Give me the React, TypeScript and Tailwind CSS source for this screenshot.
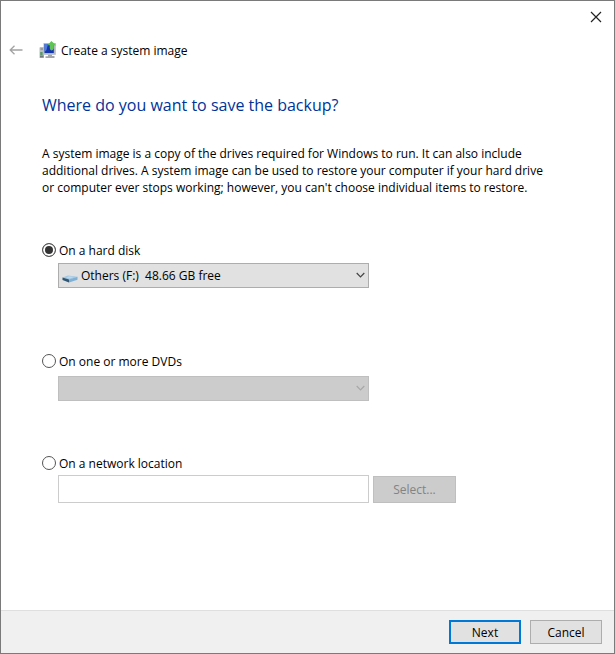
import React, { useState } from "react"

type Target = "disk" | "dvd" | "network"

const BackIcon = () => (
  <svg width="14" height="12" viewBox="0 0 14 12" fill="none" stroke="#a3a3a3">
    <path d="M13.5 6H1.2M5.5 1.8L1.2 6L5.5 10.2" strokeWidth="1.3" />
  </svg>
)

const CloseIcon = () => (
  <svg width="12" height="12" viewBox="0 0 12 12" fill="none" stroke="#222">
    <path d="M1 1l10 10M11 1L1 11" strokeWidth="1.2" />
  </svg>
)

const SystemImageIcon = () => (
  <svg width="18" height="18" viewBox="0 0 18 18">
    <path d="M1 6H5V17H0.5V7z" fill="#b9bcc0" />
    <path d="M1.5 7.5H4V8.5H1.5zM1 14.5H4.5V16.5H1z" fill="#73787d" />
    <rect x="1.2" y="11" width="2.4" height="3" fill="#5a9a6a" />
    <path d="M4.5 2H16.8V13.8H4.5z" fill="#b4b9c3" />
    <path d="M5.5 3H14.8V12H5.5z" fill="#1536ae" />
    <path d="M5.5 3H9L7.5 9L5.5 11z" fill="#4d7be0" />
    <path d="M9 13.8h4V15h2.5v2H6.5V15.2H9z" fill="#a2a6ab" />
    <path d="M12.4 0L17 4.2H14.8V7.5Q14 9.5 12.2 9.5Q10.8 8.8 10.8 7V4.2H8.5z" fill="#5fc455" />
  </svg>
)

const DriveIcon = () => (
  <svg width="16" height="10" viewBox="0 0 16 10">
    <path d="M0.5 4.5L6 2.4L15.5 3.8L7 6.8z" fill="#a3c8e2" />
    <path d="M0.5 4.5L7 6.6V9.4L0.5 7z" fill="#2f5673" />
    <path d="M7 6.6L15.5 3.8V6.8L7 9.4z" fill="#7fb0d6" />
    <path d="M4 4.4L7 3.2L12 4L8 5.6z" fill="#bcd9ec" />
  </svg>
)

const Chevron = ({ color }: { color: string }) => (
  <svg
    className="pointer-events-none absolute top-2 right-1"
    width="9"
    height="8"
    viewBox="0 0 9 8"
    fill="none"
    stroke={color}
  >
    <path d="M0.7 2L4.5 5.8L8.3 2" strokeWidth="1.2" />
  </svg>
)

type ChoiceProps = {
  label: string
  value: Target
  target: Target
  onPick: (value: Target) => void
}

const Choice = ({ label, value, target, onPick }: ChoiceProps) => (
  <label className="flex h-5 w-fit items-center gap-[3px]">
    <input
      type="radio"
      name="target"
      checked={target === value}
      onChange={() => onPick(value)}
      className="size-[14px] appearance-none rounded-full border border-[#555] bg-white checked:bg-[#333] checked:shadow-[inset_0_0_0_2px_white]"
    />
    {label}
  </label>
)

const App = () => {
  const [target, setTarget] = useState<Target>("disk")

  return (
    <div className="flex min-h-screen flex-col border border-[#7a7a7a] bg-white font-['Open_Sans','Noto_Sans',sans-serif] text-[12px] leading-[17px] text-black">
      <header>
        <div className="flex h-8 items-center justify-end pr-3">
          <button aria-label="Close">
            <CloseIcon />
          </button>
        </div>
        <div className="flex h-[34px] items-center pl-2">
          <button aria-label="Back" disabled>
            <BackIcon />
          </button>
          <div className="ml-4 flex items-center gap-1">
            <SystemImageIcon />
            <span>Create a system image</span>
          </div>
        </div>
      </header>

      <main className="flex-1 px-[41px]">
        <h1 className="mt-[26px] text-[16px] leading-6 text-[#003399]">
          Where do you want to save the backup?
        </h1>
        <p className="mt-7">
          A system image is a copy of the drives required for Windows to run. It can also include
          <br />
          additional drives. A system image can be used to restore your computer if your hard drive
          <br />
          or computer ever stops working; however, you can't choose individual items to restore.
        </p>

        <div className="mt-11">
          <Choice label="On a hard disk" value="disk" target={target} onPick={setTarget} />
          <div className="relative mt-[3px] ml-4 w-[311px]">
            <select
              aria-label="Hard disk"
              className="block h-[25px] w-full appearance-none border border-[#adadad] bg-[#e1e1e1] pl-[22px]"
            >
              <option>Others (F:)&nbsp; 48.66 GB free</option>
            </select>
            <span className="pointer-events-none absolute top-[10px] left-1">
              <DriveIcon />
            </span>
            <Chevron color="#444" />
          </div>
        </div>

        <div className="mt-[63px]">
          <Choice label="On one or more DVDs" value="dvd" target={target} onPick={setTarget} />
          <div className="relative mt-[5px] ml-4 w-[311px]">
            <select
              aria-label="DVD drive"
              disabled
              className="block h-[25px] w-full appearance-none border border-[#bfbfbf] bg-[#cccccc] opacity-100"
            />
            <Chevron color="#a8a8a8" />
          </div>
        </div>

        <div className="mt-13">
          <Choice label="On a network location" value="network" target={target} onPick={setTarget} />
          <div className="mt-[2px] ml-4 flex items-center gap-1">
            <input
              type="text"
              aria-label="Network location"
              className="h-7 w-[311px] border border-[#cccccc] bg-white px-1"
            />
            <button
              disabled
              className="h-[27px] w-[83px] border border-[#bfbfbf] bg-[#cccccc] text-[#838383]"
            >
              Select...
            </button>
          </div>
        </div>
      </main>

      <footer className="flex justify-end gap-[9px] border-t border-[#dfdfdf] bg-[#f0f0f0] py-[9px] pr-3">
        <button className="h-6 w-[72px] border-2 border-[#0078d7] bg-[#e1e1e1]">Next</button>
        <button className="h-6 w-[72px] border border-[#adadad] bg-[#e1e1e1]">Cancel</button>
      </footer>
    </div>
  )
}

export default App
